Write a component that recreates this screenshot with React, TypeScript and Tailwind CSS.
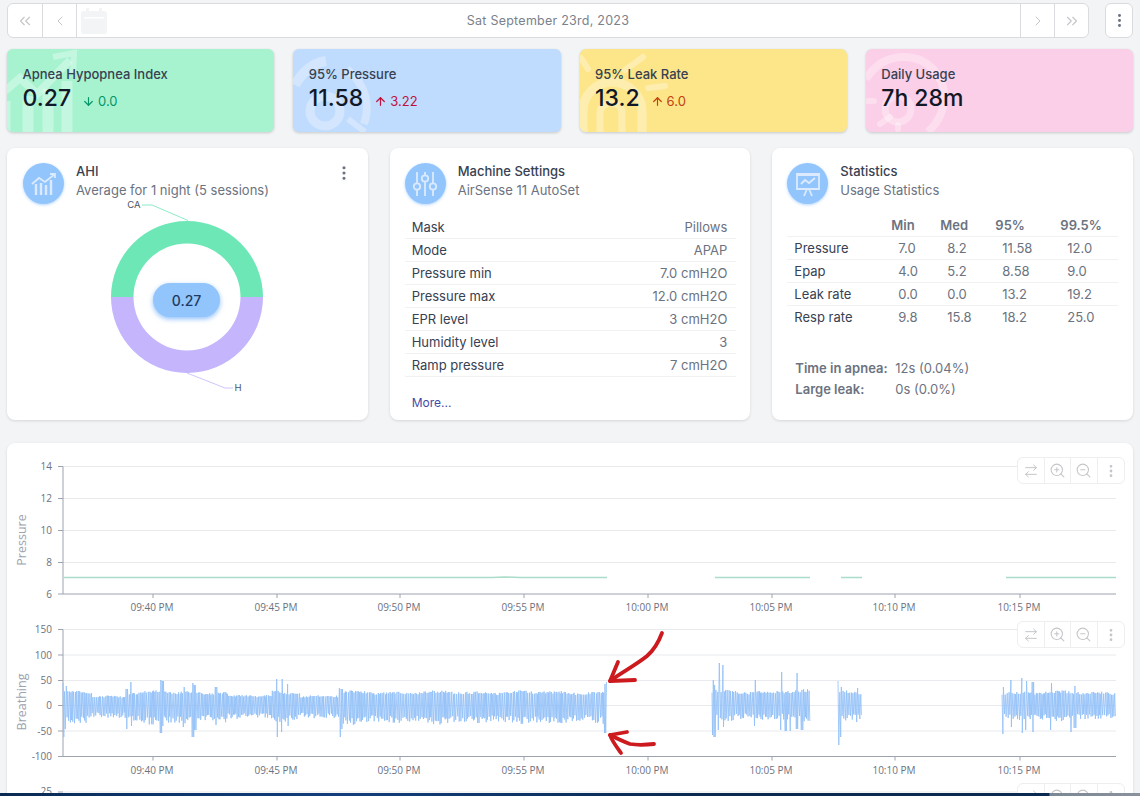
import React from "react";
import { ChevronsLeft, ChevronLeft, ChevronRight, ChevronsRight, EllipsisVertical, ArrowUp, ArrowDown, ArrowRightLeft, ZoomIn, ZoomOut } from "lucide-react";

function rng(seed: number) {
  let s = seed;
  return () => {
    s = (s + 0x6d2b79f5) | 0;
    let t = Math.imul(s ^ (s >>> 15), 1 | s);
    t = (t + Math.imul(t ^ (t >>> 7), 61 | t)) ^ t;
    return ((t ^ (t >>> 14)) >>> 0) / 4294967296;
  };
}

type Spike = [number, number, number];
const QUIET: [number, number][] = [[92, 125], [228, 272], [300, 338]];
function wave(start: number, end: number, seed: number, spikes: Spike[], top: number, bottom: number) {
  const r = rng(seed);
  let d = "";
  let x = start;
  let up = true;
  while (x < end) {
    const near = spikes.find((s) => Math.abs(s[0] - x) < 0.9);
    const quiet = QUIET.some(([a, b]) => x >= a && x <= b) ? 0.72 : 1;
    const dip = (0.9 + 0.1 * Math.sin(x / 23 + seed) * Math.sin(x / 9)) * quiet;
    let y: number;
    if (near) y = up ? near[1] : near[2];
    else if (up) y = 705.5 - (705.5 - top) * (0.82 + 0.18 * r()) * dip;
    else y = 705.5 + (bottom - 705.5) * (0.58 + 0.42 * r()) * dip;
    d += (d ? "L" : "M") + x.toFixed(1) + " " + y.toFixed(1);
    x += 0.45 + r() * 0.6;
    up = !up;
  }
  return d;
}

const WAVES = [
  wave(63, 607, 11, [[63.5, 683, 737], [66, 686, 729], [127, 689, 729], [131, 682, 726], [161, 680, 733], [163, 681, 726], [184, 687, 727], [193, 683, 737], [195, 685, 730], [216, 687, 725], [277, 679, 737], [282, 679, 732], [288, 684, 726], [340, 688, 737], [342, 689, 729], [605, 684, 733], [606.5, 682, 735]], 690, 725),
  wave(712, 810, 23, [[713, 680, 735], [714.5, 685, 737], [719, 663, 730], [723, 665, 727], [755, 680, 726], [781, 672, 730], [786, 692, 731], [790, 693, 731], [797, 673, 729], [802, 690, 730]], 689, 722),
  wave(838, 862, 37, [[838.5, 681, 745], [841, 687, 737], [857, 688, 722]], 689, 722),
  wave(1002, 1116, 53, [[1003, 687, 734], [1011, 680, 727], [1022, 678, 733], [1026, 681, 730], [1033, 682, 732], [1051, 683, 730], [1071, 683, 732], [1075, 686, 728]], 690, 722),
];

const TIME_TICKS: [number, string][] = [[153, "09:40 PM"], [277, "09:45 PM"], [400, "09:50 PM"], [524, "09:55 PM"], [648, "10:00 PM"], [772, "10:05 PM"], [895, "10:10 PM"], [1020, "10:15 PM"]];

function Circle({ children }: { children: React.ReactNode }) {
  return (
    <div className="flex h-[41px] w-[41px] shrink-0 items-center justify-center rounded-full bg-[#93c5fd] shadow-[0_1px_3px_rgba(147,197,253,0.7)]">
      {children}
    </div>
  );
}

function PanelHeader({ title, sub, icon }: { title: string; sub: string; icon: React.ReactNode }) {
  return (
    <div className="flex items-start gap-[12px]">
      <Circle>{icon}</Circle>
      <div className="-mt-[1px] text-[13px] leading-[19px]">
        <div className="font-medium text-[#374151]">{title}</div>
        <div className="text-[#6b7280]">{sub}</div>
      </div>
    </div>
  );
}

function Stat({ bg, title, value, delta, up, color, art }: { bg: string; title: string; value: string; delta?: string; up?: boolean; color?: string; art: React.ReactNode }) {
  return (
    <div className={`relative h-[83px] overflow-hidden rounded-md shadow-[0_1px_3px_rgba(0,0,0,0.18)] ${bg}`}>
      <svg className="absolute left-0 top-0" width="100" height="83" viewBox="0 0 100 83" fill="none" stroke="#fff" strokeOpacity="0.32" strokeWidth="8">{art}</svg>
      <div className="relative pl-[15.5px] pt-[16px]">
        <div className="text-[13px] font-medium leading-[18px] text-[#374151]">{title}</div>
        <div className="flex items-baseline pt-[1px]">
          <span className="text-[23px] font-medium leading-[29px] text-[#111827]">{value}</span>
          {delta && (
            <span className="ml-[11px] flex translate-y-[2px] items-center gap-[3px] text-[13px]" style={{ color }}>
              {up ? <ArrowUp size={13} strokeWidth={2.2} /> : <ArrowDown size={13} strokeWidth={2.2} />}
              {delta}
            </span>
          )}
        </div>
      </div>
    </div>
  );
}

function Toolbar({ top }: { top: string }) {
  const cell = "flex w-[26.5px] items-center justify-center";
  return (
    <div className={`absolute right-[8px] ${top} flex h-[27px] divide-x divide-[#eceef0] rounded-md border border-[#eceef0] bg-white text-[#c3c6ca]`}>
      <div className={cell}><ArrowRightLeft size={16} strokeWidth={1.5} /></div>
      <div className={cell}><ZoomIn size={17} strokeWidth={1.5} /></div>
      <div className={cell}><ZoomOut size={17} strokeWidth={1.5} /></div>
      <div className={cell}><EllipsisVertical size={16} strokeWidth={2.2} /></div>
    </div>
  );
}

function Axis({ ys, axisY, labels, name, nameY }: { ys: number[]; axisY: number; labels: string[]; name: string; nameY: number }) {
  return (
    <g>
      {ys.map((y) => <line key={y} x1="63" x2="1116" y1={y} y2={y} stroke="#e8eaed" strokeWidth="1" />)}
      {ys.map((y, i) => (
        <g key={"t" + y}>
          <line x1="58" x2="63" y1={y} y2={y} stroke="#9ca3af" />
          <text x="52" y={y + 3.5} textAnchor="end" fontSize="10" fill="#6b7280">{labels[i]}</text>
        </g>
      ))}
      <line x1="63" x2="63" y1={ys[0]} y2={axisY} stroke="#9ca3af" />
      <line x1="63" x2="1116" y1={axisY} y2={axisY} stroke="#9ca3af" />
      {TIME_TICKS.map(([x, t]) => (
        <g key={t}>
          <line x1={x} x2={x} y1={axisY} y2={axisY + 4} stroke="#9ca3af" />
          <text x={x - 1} y={axisY + 17} textAnchor="middle" fontSize="10" fill="#6b7280">{t}</text>
        </g>
      ))}
      <text transform={`translate(26 ${nameY}) rotate(-90)`} textAnchor="middle" fontSize="12.5" fill="#9ca3af">{name}</text>
    </g>
  );
}

const machine = [["Mask", "Pillows"], ["Mode", "APAP"], ["Pressure min", "7.0 cmH2O"], ["Pressure max", "12.0 cmH2O"], ["EPR level", "3 cmH2O"], ["Humidity level", "3"], ["Ramp pressure", "7 cmH2O"]];
const stats = [["Pressure", "7.0", "8.2", "11.58", "12.0"], ["Epap", "4.0", "5.2", "8.58", "9.0"], ["Leak rate", "0.0", "0.0", "13.2", "19.2"], ["Resp rate", "9.8", "15.8", "18.2", "25.0"]];

export default function App() {
  return (
    <div className="relative flex h-[796px] w-[1140px] flex-col overflow-hidden bg-[#f3f4f6] pl-[7px] pr-[7px] pt-[3px] text-[#374151]" style={{ fontFamily: "Inter, 'Noto Sans', sans-serif" }}>
      {/* date bar */}
      <div className="flex h-[35px] gap-[16px]">
        <div className="flex flex-1 rounded-md border border-[#d9dbde] bg-white text-[#c3c6ca]">
          <div className="flex w-[35px] items-center justify-center border-r border-[#d9dbde]"><ChevronsLeft size={18} strokeWidth={1.5} /></div>
          <div className="flex w-[34px] items-center justify-center border-r border-[#d9dbde]"><ChevronLeft size={16} strokeWidth={1.5} /></div>
          <div className="flex w-[34px] items-center justify-center">
            <svg width="26" height="26" viewBox="0 0 26 26" fill="#f3f4f6"><rect x="0" y="3" width="26" height="23" rx="3" /><rect x="5" y="0" width="3" height="6" /><rect x="18" y="0" width="3" height="6" /><rect x="3" y="9" width="20" height="1.5" fill="#fff" /></svg>
          </div>
          <div className="flex flex-1 items-center justify-center pr-[35px] pt-[1px] text-[12.5px] tracking-[0.25px] text-[#7b818b]">Sat September 23rd, 2023</div>
          <div className="flex w-[34px] items-center justify-center border-l border-[#d9dbde]"><ChevronRight size={16} strokeWidth={1.5} /></div>
          <div className="flex w-[34px] items-center justify-center border-l border-[#d9dbde]"><ChevronsRight size={18} strokeWidth={1.5} /></div>
        </div>
        <div className="flex w-[28px] items-center justify-center rounded-md border border-[#d9dbde] bg-white text-[#6b7280]"><EllipsisVertical size={17} strokeWidth={2.2} /></div>
      </div>

      {/* stat cards */}
      <div className="mt-[11px] grid grid-cols-4 gap-[19px]">
        <Stat bg="bg-[#a7f3d0]" title="Apnea Hypopnea Index" value="0.27" delta="0.0" color="#059669" art={
          <g>
            <path d="M-2 83V52M21 83V47M41 83V40M60 83V32" strokeWidth="11" />
            <path d="M-2 42L13 29L30 45L63 11" />
            <path d="M46 8L67 4L66 24" strokeWidth="6" />
          </g>
        } />
        <Stat bg="bg-[#bfdbfe]" title="95% Pressure" value="11.58" delta="3.22" up color="#be123c" art={
          <g>
            <path d="M2 36C10 22 20 14 33 12" strokeWidth="10" />
            <circle cx="32" cy="62" r="15" strokeWidth="9" />
            <path d="M54 20C72 35 78 55 71 75" strokeWidth="8" />
            <path d="M55 70L72 83" strokeWidth="6" />
          </g>
        } />
        <Stat bg="bg-[#fde68a]" title="95% Leak Rate" value="13.2" delta="6.0" up color="#c2410c" art={
          <g>
            <path d="M3 83V62C3 46 16 33 32 33C48 33 62 46 62 62V83" strokeWidth="9" />
            <path d="M20 83V64C20 58 25 54 31 54C38 54 42 58 42 64V83" strokeWidth="7" />
            <path d="M45 21L63 8M68 39L85 37M1 9L8 20" strokeWidth="6" strokeLinecap="round" />
          </g>
        } />
        <Stat bg="bg-[#fbcfe8]" title="Daily Usage" value="7h 28m" art={
          <g>
            <path d="M0 30C10 14 24 8 38 8C62 8 80 28 78 52C77 62 72 74 62 83" strokeWidth="8" />
            <circle cx="32" cy="60" r="13" strokeWidth="7" />
            <path d="M14 75L24 68M2 52L8 52M32 80V76" strokeWidth="6" strokeLinecap="round" />
          </g>
        } />
      </div>

      {/* panels */}
      <div className="mt-[16px] grid h-[272px] grid-cols-3 gap-[22px]">
        <div className="relative rounded-lg bg-white pl-[16px] pr-[16px] pt-[15px] shadow-[0_1px_3px_rgba(0,0,0,0.12)]">
          <PanelHeader title="AHI" sub="Average for 1 night (5 sessions)" icon={
            <svg width="26" height="24" viewBox="0 0 26 24" fill="none" stroke="#dbeafe" strokeWidth="1.8"><path d="M5 23V12M10 23V11M15 23V13M20 23V8" strokeWidth="2.4" /><path d="M1 12L8 6L14 10L24 2M19 2H24V6" /></svg>
          } />
          <div className="absolute right-[15px] top-[16px] text-[#6b7280]"><EllipsisVertical size={18} strokeWidth={2.2} /></div>
          <svg className="absolute left-0 top-0" width="360" height="272" viewBox="7 148 360 272">
            <path d="M111 297A76 76 0 0 1 263 297H240.5A53.5 53.5 0 0 0 133.5 297Z" fill="#6ee7b7" />
            <path d="M111 297A76 76 0 0 0 263 297H240.5A53.5 53.5 0 0 1 133.5 297Z" fill="#c4b5fd" />
            <path d="M142 205H152L188 220.5" fill="none" stroke="#6ee7b7" strokeWidth="0.8" />
            <path d="M187 373L225 388H233" fill="none" stroke="#c4b5fd" strokeWidth="0.8" />
            <text x="134" y="208" textAnchor="middle" fontSize="9.5" fill="#4b5563">CA</text>
            <text x="238" y="391" textAnchor="middle" fontSize="9.5" fill="#4b5563">H</text>
          </svg>
          <div className="absolute left-[146px] top-[135px] flex h-[34px] w-[67px] items-center justify-center rounded-full bg-[#93c5fd] text-[14px] font-medium text-[#1e3a5f] shadow-[0_2px_5px_rgba(96,165,250,0.7)]">0.27</div>
        </div>

        <div className="rounded-lg bg-white pl-[15px] pr-[14px] pt-[15px] shadow-[0_1px_3px_rgba(0,0,0,0.12)]">
          <PanelHeader title="Machine Settings" sub="AirSense 11 AutoSet" icon={
            <svg width="26" height="26" viewBox="0 0 26 26" fill="none" stroke="#dbeafe" strokeWidth="1.8"><path d="M5 1V12M5 19V25M13 1V4M13 11V25M21 1V12M21 19V25" /><circle cx="5" cy="15.5" r="3.2" /><circle cx="13" cy="7.5" r="3.2" /><circle cx="21" cy="15.5" r="3.2" /></svg>
          } />
          <div className="mt-[12px] text-[13px] leading-[22px]">
            {machine.map(([k, v]) => (
              <div key={k} className="flex h-[23px] items-center justify-between border-b border-[#f0f1f3] pl-[7px] pr-[9px]">
                <span className="text-[#374151]">{k}</span>
                <span className="text-[#6b7280]">{v}</span>
              </div>
            ))}
          </div>
          <div className="ml-[7px] mt-[17px] text-[12px] text-[#3f4ba8]">More...</div>
        </div>

        <div className="rounded-lg bg-white pl-[15px] pr-[14px] pt-[15px] shadow-[0_1px_3px_rgba(0,0,0,0.12)]">
          <PanelHeader title="Statistics" sub="Usage Statistics" icon={
            <svg width="26" height="26" viewBox="0 0 26 26" fill="none" stroke="#dbeafe" strokeWidth="1.8"><path d="M2 4H24V18H2ZM1 3H25" /><path d="M6 13L10 9L14 12L20 7" /><path d="M9 25L12 18M17 25L14 18" /></svg>
          } />
          <table className="mt-[11px] w-[331px] table-fixed border-collapse text-[13px] leading-[20px]">
            <colgroup><col className="w-[104px]" /><col className="w-[49px]" /><col className="w-[55px]" /><col className="w-[65px]" /><col className="w-[58px]" /></colgroup>
            <thead>
              <tr className="h-[21px] border-b border-[#f0f1f3] text-left font-semibold text-[#6b7280]">
                <th></th><th className="font-semibold">Min</th><th className="font-semibold">Med</th><th className="font-semibold">95%</th><th className="font-semibold">99.5%</th>
              </tr>
            </thead>
            <tbody>
              {stats.map((r, i) => (
                <tr key={r[0]} className={`h-[23px] ${i < 3 ? "border-b border-[#f0f1f3]" : ""}`}>
                  <td className="pl-[7px] text-[#374151]">{r[0]}</td>
                  {r.slice(1).map((c, j) => <td key={j} className="pl-[7px] text-[#6b7280]">{c}</td>)}
                </tr>
              ))}
            </tbody>
          </table>
          <div className="ml-[8px] mt-[30px] text-[13px] leading-[21px] text-[#6b7280]">
            <div className="flex"><span className="w-[100px] font-semibold">Time in apnea:</span><span>12s (0.04%)</span></div>
            <div className="flex"><span className="w-[100px] font-semibold">Large leak:</span><span>0s (0.0%)</span></div>
          </div>
        </div>
      </div>

      {/* charts */}
      <div className="mt-[23px] flex-1 overflow-hidden rounded-t-lg bg-white shadow-[0_1px_3px_rgba(0,0,0,0.12)]">
        <div className="relative h-[172px]">
          <svg width="1126" height="172" viewBox="7 443 1126 172" style={{ fontFamily: "'Open Sans', sans-serif" }}>
            <Axis ys={[466.5, 498.5, 530.5, 562.5]} axisY={594} labels={["14", "12", "10", "8"]} name="Pressure" nameY={540} />
            <text x="52" y="597.5" textAnchor="end" fontSize="10" fill="#6b7280">6</text>
            <line x1="58" x2="63" y1="594" y2="594" stroke="#9ca3af" />
            <path d="M64 577.5H492L505 577L520 577.5H607M715 577.5H810M841 577.5H862M1006 577.5H1116" fill="none" stroke="#a9dcc9" strokeWidth="1.5" />
          </svg>
          <Toolbar top="top-[14px]" />
        </div>
        <div className="relative h-[163px]">
          <svg width="1126" height="163" viewBox="7 615 1126 163" style={{ fontFamily: "'Open Sans', sans-serif" }}>
            <Axis ys={[629.5, 655, 680.5, 705.5, 731]} axisY={756.5} labels={["150", "100", "50", "0", "-50"]} name="Breathing" nameY={702} />
            <text x="52" y="760" textAnchor="end" fontSize="10" fill="#6b7280">-100</text>
            <line x1="58" x2="63" y1="756.5" y2="756.5" stroke="#9ca3af" />
            {WAVES.map((d, i) => <path key={i} d={d} fill="none" stroke="#8fbff8" strokeWidth="0.9" strokeOpacity="0.9" />)}
            <g fill="none" stroke="#cc1a1f" strokeWidth="3.8" strokeLinecap="round" strokeLinejoin="round">
              <path d="M662 633C659 641 654 650 647 656C636 665 622 672 610 681" />
              <path d="M618 662L610 681L635 680" />
              <path d="M654 744C645 745 636 745 630 744C622 741 616 738 610 735" />
              <path d="M627 732L610 735C612 741 616 746 621 753" />
            </g>
          </svg>
          <Toolbar top="top-[6px]" />
        </div>
        <div className="relative h-[20px] overflow-hidden">
          <svg width="1126" height="20" viewBox="7 778 1126 20" style={{ fontFamily: "'Open Sans', sans-serif" }}>
            <text x="52" y="795" textAnchor="end" fontSize="10" fill="#6b7280">25</text>
            <line x1="58" x2="63" y1="792" y2="792" stroke="#9ca3af" />
            <line x1="63" x2="1116" y1="792" y2="792" stroke="#e8eaed" />
          </svg>
          <Toolbar top="top-[5px]" />
        </div>
      </div>

      {/* desktop taskbar peeking at the bottom edge */}
      <div className="absolute bottom-0 left-0 h-[3px] w-full bg-[linear-gradient(90deg,#0a2a52_0%,#0c3468_12%,#123f7c_30%,#0a2a52_60%,#0a2a52_92%,#7b8794_92.1%,#8a929c_100%)]"></div>
    </div>
  );
}
